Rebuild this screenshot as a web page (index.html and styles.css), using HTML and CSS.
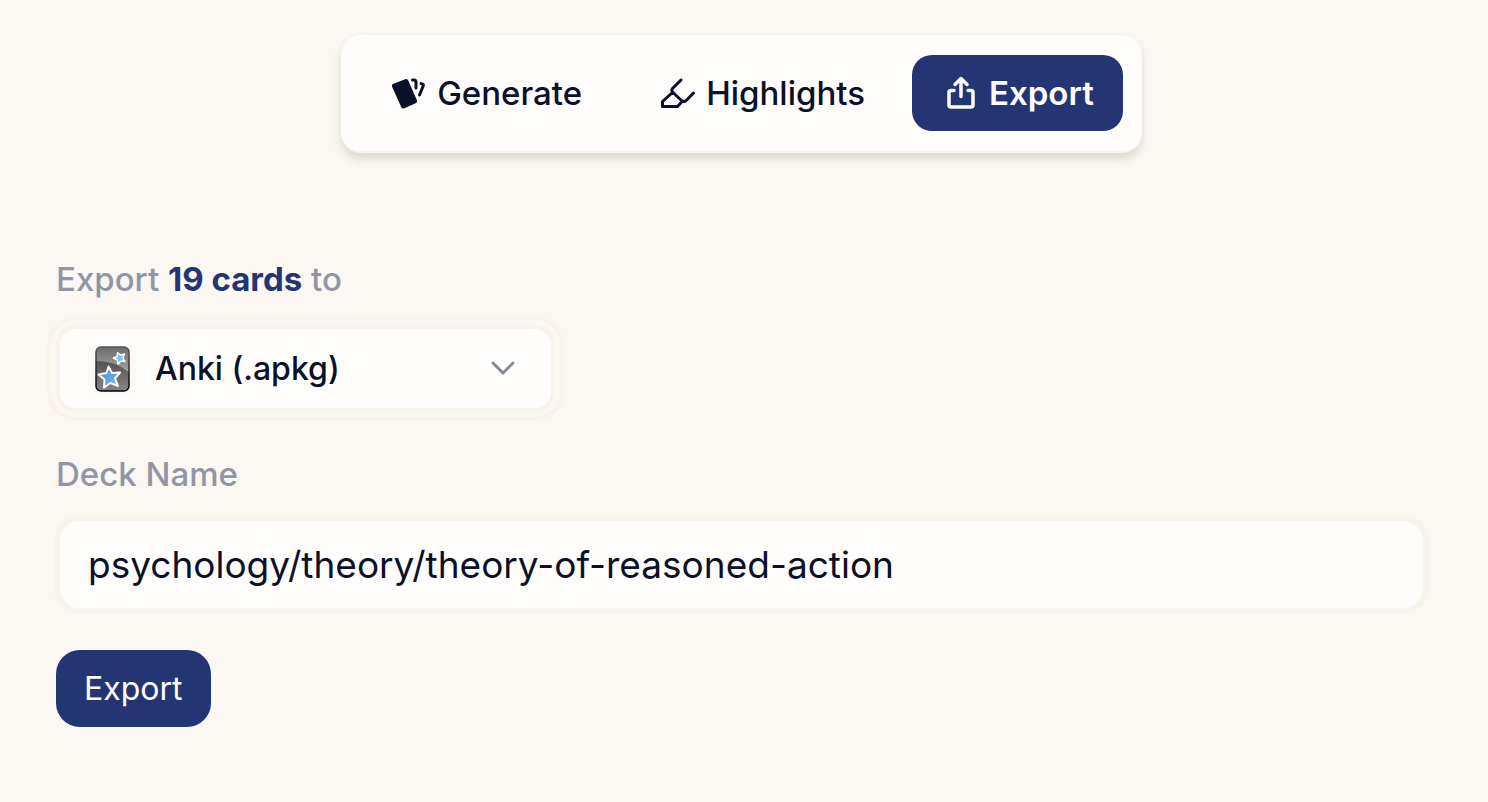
FILE: index.html
```html
<!DOCTYPE html>
<html lang="en">
<head>
  <meta charset="UTF-8" />
  <meta name="viewport" content="width=device-width, initial-scale=1.0"/>
  <title>Export cards</title>
  <link rel="stylesheet" href="styles.css">
</head>
<body>
  <nav class="tabs">
    <button type="button" class="tab">
      <svg class="tab-icon" viewBox="0 0 36 36" fill="none" stroke="currentColor" stroke-width="3" stroke-linecap="round" stroke-linejoin="round" aria-hidden="true">
        <path fill="currentColor" stroke-width="5" d="M4.500 11 16 6.500 24.500 26 13.500 31Z"/>
        <path d="M22.500 5H24q2 0 2 2v6M31 8.500l1.500.7q1.200.6.7 1.800L29.500 20"/>
      </svg>
      Generate
    </button>
    <button type="button" class="tab">
      <svg class="tab-icon" viewBox="0 0 36 36" fill="none" stroke="currentColor" stroke-width="3" stroke-linecap="round" stroke-linejoin="round" aria-hidden="true">
        <path d="M22 5 13.500 13.500q-1.200 1.300-.3 2.800l.8 1.200 9 8.500 1 .2q2 .6 3.500-.9L34.500 18M13.500 17.500 3.500 26.500V31.500H18.500l4.500-5"/>
      </svg>
      Highlights
    </button>
    <button type="button" class="tab active">
      <svg class="tab-icon" viewBox="0 0 36 36" fill="none" stroke="currentColor" stroke-width="3.500" stroke-linecap="round" stroke-linejoin="round" aria-hidden="true">
        <path d="M12 15.500H9q-2 0-2 2v12.500q0 2 2 2h20q2 0 2-2V17.500q0-2-2-2h-3M19 21.500V4M13 9.500l6-6 6 6"/>
      </svg>
      Export
    </button>
  </nav>

  <form class="export-form" id="exportForm">
    <label for="format">Export <strong>19 cards</strong> to</label>
    <div class="select-wrap">
      <select id="format" name="format">
        <option>Anki (.apkg)</option>
      </select>
      <svg class="anki" viewBox="0 0 48 48" aria-hidden="true">
        <defs>
          <linearGradient id="shine" x1="0" y1="0" x2="0" y2="1">
            <stop offset="0" stop-color="#6b6b6b"/>
            <stop offset="1" stop-color="#a5a5a5"/>
          </linearGradient>
          <linearGradient id="base" x1="0" y1="0" x2="0" y2="1">
            <stop offset="0" stop-color="#3a3a3a"/>
            <stop offset="1" stop-color="#858585"/>
          </linearGradient>
          <linearGradient id="edge" x1="0" y1="0" x2="0" y2="1">
            <stop offset="0" stop-color="#555"/>
            <stop offset="1" stop-color="#000"/>
          </linearGradient>
          <linearGradient id="blue" x1="0" y1="0" x2="1" y2="1">
            <stop offset="0" stop-color="#2f80d2"/>
            <stop offset="1" stop-color="#8cc4f6"/>
          </linearGradient>
        </defs>
        <rect width="48" height="48" rx="5" fill="#fcf9f5"/>
        <rect x="8" y="2" width="33" height="44" rx="5" fill="url(#base)"/>
        <path fill="url(#shine)" d="M8 16V7q0-5 5-5h23q5 0 5 5v20Q27 16 8 16Z"/>
        <rect x="8" y="2" width="33" height="44" rx="5" fill="none" stroke="url(#edge)" stroke-width="1.500"/>
        <path fill="url(#blue)" stroke="#fff" stroke-width="2" stroke-linejoin="round" d="m20.500 21.500 3.500 6.500 8-.5-5 6 3 7.500-7.500-3-6.500 4.500.5-8-6-5 8-1.500Z"/>
        <path fill="#84bdf0" stroke="#fff" stroke-width="1.500" stroke-linejoin="round" d="m29.500 7.500 3 2.500 4-1-1.500 4 2 3.500-4-.5-3 3-.8-4-3.700-2 3.700-1.500Z"/>
      </svg>
      <svg class="chevron" viewBox="0 0 24 24" fill="none" stroke="currentColor" stroke-width="3" stroke-linecap="round" stroke-linejoin="round" aria-hidden="true">
        <path d="m2 6 10 10L22 6"/>
      </svg>
    </div>

    <label for="deck">Deck Name</label>
    <input type="text" id="deck" name="deck" value="psychology/theory/theory-of-reasoned-action" />

    <button type="submit" class="submit">Export</button>
  </form>
</body>
</html>
```
FILE: styles.css
```css
* {
  box-sizing: border-box;
}
body {
  margin: 0;
  padding: 35px 61px 35px 56px;
  background: #fbf8f3;
  color: #0a1128;
  font-family: Inter, "Liberation Sans", sans-serif;
  font-size: 33px;
  line-height: 40px;
}
button, input, select {
  font: inherit;
  color: inherit;
}
button {
  border: none;
  cursor: pointer;
}
.tabs {
  display: flex;
  gap: 18px;
  width: fit-content;
  margin: 0 auto;
  padding: 20px 19px;
  background: #fffdfc;
  border-bottom: 2px solid #faf3ec;
  border-radius: 20px;
  box-shadow: 0 6px 10px rgba(60, 60, 40, 0.16);
}
.tab {
  display: flex;
  align-items: center;
  gap: 11px;
  height: 76px;
  padding: 0 29px 0 30px;
  background: none;
  border-radius: 20px;
  font-weight: 500;
}
.tab.active {
  background: #243574;
  color: #fffdfc;
  font-weight: 600;
}
.tab-icon {
  width: 36px;
  height: 36px;
}
.export-form {
  display: flex;
  flex-direction: column;
  align-items: flex-start;
  margin-top: 106px;
}
label {
  color: #9195a5;
  font-weight: 500;
}
label strong {
  color: #243574;
  font-weight: 700;
}
.select-wrap {
  position: relative;
  width: 100%;
  max-width: 499px;
  margin: 26px 0 42px;
}
select {
  display: block;
  width: 100%;
  height: 87px;
  padding: 0 60px 0 95px;
  appearance: none;
  background: #fffdfc;
  border: 4px solid #faf3ec;
  border-radius: 20px;
  outline: 4px solid #faf3ec;
  outline-offset: 5px;
  font-size: 32px;
  font-weight: 500;
}
.anki {
  position: absolute;
  top: 20px;
  left: 32px;
  width: 48px;
  height: 48px;
  pointer-events: none;
}
.chevron {
  position: absolute;
  top: 32px;
  right: 40px;
  width: 24px;
  height: 24px;
  color: #858995;
  pointer-events: none;
}
input {
  align-self: stretch;
  height: 99px;
  margin: 21px -2px 36px;
  padding: 0 28px;
  background: #fffdfc;
  border: 6px solid #faf3ec;
  border-radius: 26px;
  outline: none;
  font-size: 37px;
}
.submit {
  height: 77px;
  padding: 0 28px;
  background: #243574;
  color: #fffdfc;
  border-radius: 24px;
  font-size: 32px;
}
```
